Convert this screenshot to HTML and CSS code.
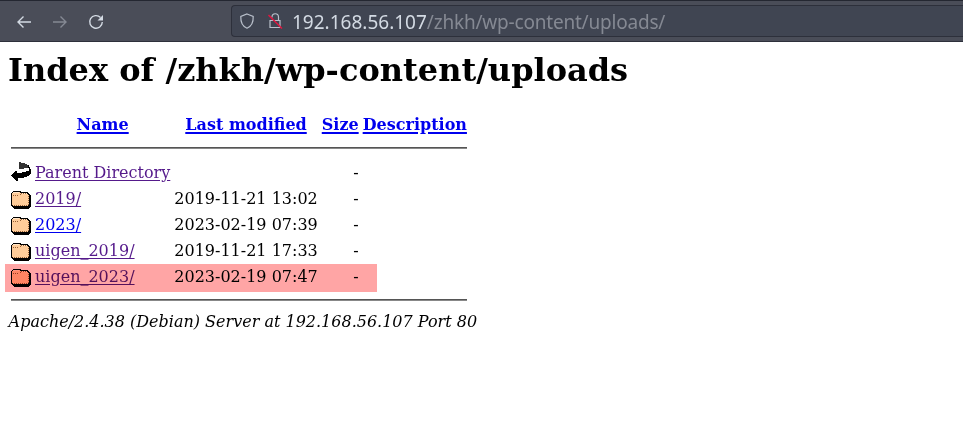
FILE: index.html
```html
<!DOCTYPE html>
<html lang="en">
<head>
<meta charset="utf-8">
<title>Index of /zhkh/wp-content/uploads</title>
<link rel="stylesheet" href="styles.css">
</head>
<body>
<svg class="defs" width="0" height="0">
  <symbol id="folder" viewBox="0 0 20 22">
    <g shape-rendering="crispEdges">
    <path d="M2 3h8v1h7v1h1v1h1v1h1v12h-1v1h-1v1H3v-1H2v-1H1v-1H0V5h1V4h1z" fill="#000"/>
    <path d="M2 4h7v1h7v1h1v1h1v10h-1v1H2v-1H1V5h1z" fill="#fc9"/>
    <path d="M2 4.500h6M10 5.500h6" stroke="#ffe6c8" fill="none"/>
    <path d="M2 7.500h6M9 6.500h1M10 5.500h6M17.500 8v9M3 17.500h14" stroke="#965f35" fill="none" stroke-dasharray="1 1"/>
    </g>
  </symbol>
</svg>
<header class="toolbar">
  <nav class="nav">
    <svg width="16" height="16" viewBox="0 0 16 16"><path d="M15 8H2M7.500 2.500L2 8l5.500 5.500"/></svg>
    <svg class="off" width="16" height="16" viewBox="0 0 16 16"><path d="M1 8h13M8.500 2.500L14 8l-5.500 5.500"/></svg>
    <svg width="16" height="16" viewBox="0 0 16 16"><path d="M12.500 3.500A6.300 6.300 0 1 0 14.300 8"/><path class="solid" d="M15 1v5.500H9.500z"/></svg>
  </nav>
  <div class="urlbar">
    <svg width="16" height="16" viewBox="0 0 16 16"><path d="M8 1L14.200 3.500C14.500 9.500 12 13.500 8 15.200C4 13.500 1.500 9.500 1.800 3.500Z"/></svg>
    <svg width="16" height="16" viewBox="0 0 16 16"><path d="M5 4.500V4a3.200 3.200 0 0 1 6.500 0v3M3 7.500h10v7H3z"/><path class="slash" d="M1.500 2L15 15.500"/></svg>
    <span class="url"><b>192.168.56.107</b>/zhkh/wp-content/uploads/</span>
  </div>
</header>
<main>
<h1>Index of /zhkh/wp-content/uploads</h1>
<div class="listing">
<table>
  <tr><th class="icon"></th><th><a class="new" href="#">Name</a></th><th><a class="new" href="#">Last modified</a></th><th><a class="new" href="#">Size</a></th><th><a class="new" href="#">Description</a></th></tr>
  <tr><th colspan="5"><hr></th></tr>
  <tr><td><svg class="ico" width="20" height="22" viewBox="0 0 20 22"><g shape-rendering="crispEdges"><path d="M8 0h2v1h4v1h2v1h2v2h1v2h1v5h-1v1h-1v1h-2v1h-3v1H7v3H5v-1H4v-1H3v-1H2v-1H1v-1H0v-1h1v-1h1v-1h1v-1h1V9h2v2h5v-1h4V9h3V6H8z"/><path d="M8 0h2v1h4v1h2v1h1v3h-4v1H8z" fill="#333"/><path d="M12 7h6v1h-6z" fill="#fff"/></g></svg></td><td><a href="#">Parent Directory</a></td><td></td><td class="num">-</td><td></td></tr>
  <tr><td><svg class="ico" width="20" height="22"><use href="#folder"/></svg></td><td><a href="#">2019/</a></td><td class="num">2019-11-21 13:02</td><td class="num">-</td><td></td></tr>
  <tr><td><svg class="ico" width="20" height="22"><use href="#folder"/></svg></td><td><a class="new" href="#">2023/</a></td><td class="num">2023-02-19 07:39</td><td class="num">-</td><td></td></tr>
  <tr><td><svg class="ico" width="20" height="22"><use href="#folder"/></svg></td><td><a href="#">uigen_2019/</a></td><td class="num">2019-11-21 17:33</td><td class="num">-</td><td></td></tr>
  <tr><td><svg class="ico" width="20" height="22"><use href="#folder"/></svg></td><td><a href="#">uigen_2023/</a></td><td class="num">2023-02-19 07:47</td><td class="num">-</td><td></td></tr>
  <tr><th colspan="5"><hr></th></tr>
</table>
<div class="highlight"></div>
</div>
<address>Apache/2.4.38 (Debian) Server at 192.168.56.107 Port 80</address>
</main>
</body>
</html>
```
FILE: styles.css
```css
* { box-sizing: border-box; }
body { margin: 0; background: #fff; color: #000; font: 16px/19px "DejaVu Serif", serif; overflow: hidden; }
.defs { display: block; }
.toolbar { height: 42px; display: flex; padding: 4px 0 4px 16px; background: #4a4d58; border-top: 1px solid #242731; border-bottom: 1px solid #2d303b; }
.nav { width: 215px; display: flex; gap: 20px; padding-top: 9px; }
.toolbar svg { fill: none; stroke: #d3dae3; stroke-width: 1.4; flex: none; }
.toolbar .off { stroke: #858993; }
.toolbar .solid { fill: #d3dae3; stroke: none; }
.toolbar .slash { stroke: #e2163f; stroke-width: 1.5; }
.urlbar { flex: 1; height: 32px; display: flex; align-items: center; background: #404552; border: 1px solid #2d303b; border-right: 0; border-radius: 4px 0 0 4px; padding-left: 7px; }
.urlbar svg + svg { margin-left: 12px; }
.urlbar svg { stroke: #b9c0cb; stroke-width: 1.2; }
.url { margin-left: 9px; padding-top: 2px; font: 19px/28px "Noto Sans", sans-serif; letter-spacing: -.2px; color: #858993; white-space: nowrap; }
.url b { font-weight: 400; letter-spacing: 0; color: #d3dae3; }
main { padding: 0 8px; }
h1 { margin: 9px 0 23px; font-size: 32px; line-height: 38px; }
.listing { position: relative; width: max-content; }
table { border-collapse: separate; border-spacing: 2px; }
td, th { padding: 1px; white-space: nowrap; }
tr:first-child th { padding-bottom: 2px; }
td { height: 24px; }
.icon { width: 22px; }
.num { text-align: right; }
.ico { display: block; margin: 1px 0 -1px; }
a { color: #551a8b; text-decoration: underline; text-underline-offset: 2px; }
a.new { color: #00e; }
th a.new { text-decoration-thickness: 2px; }
hr { height: 2px; margin: 8px 0; border: 0; border-top: 1px solid #555; background: #888; }
.highlight { position: absolute; left: -3px; top: 152px; width: 372px; height: 28px; background: #ffa5a5; mix-blend-mode: multiply; }
address { font-style: italic; padding-left: .6px; }
```
